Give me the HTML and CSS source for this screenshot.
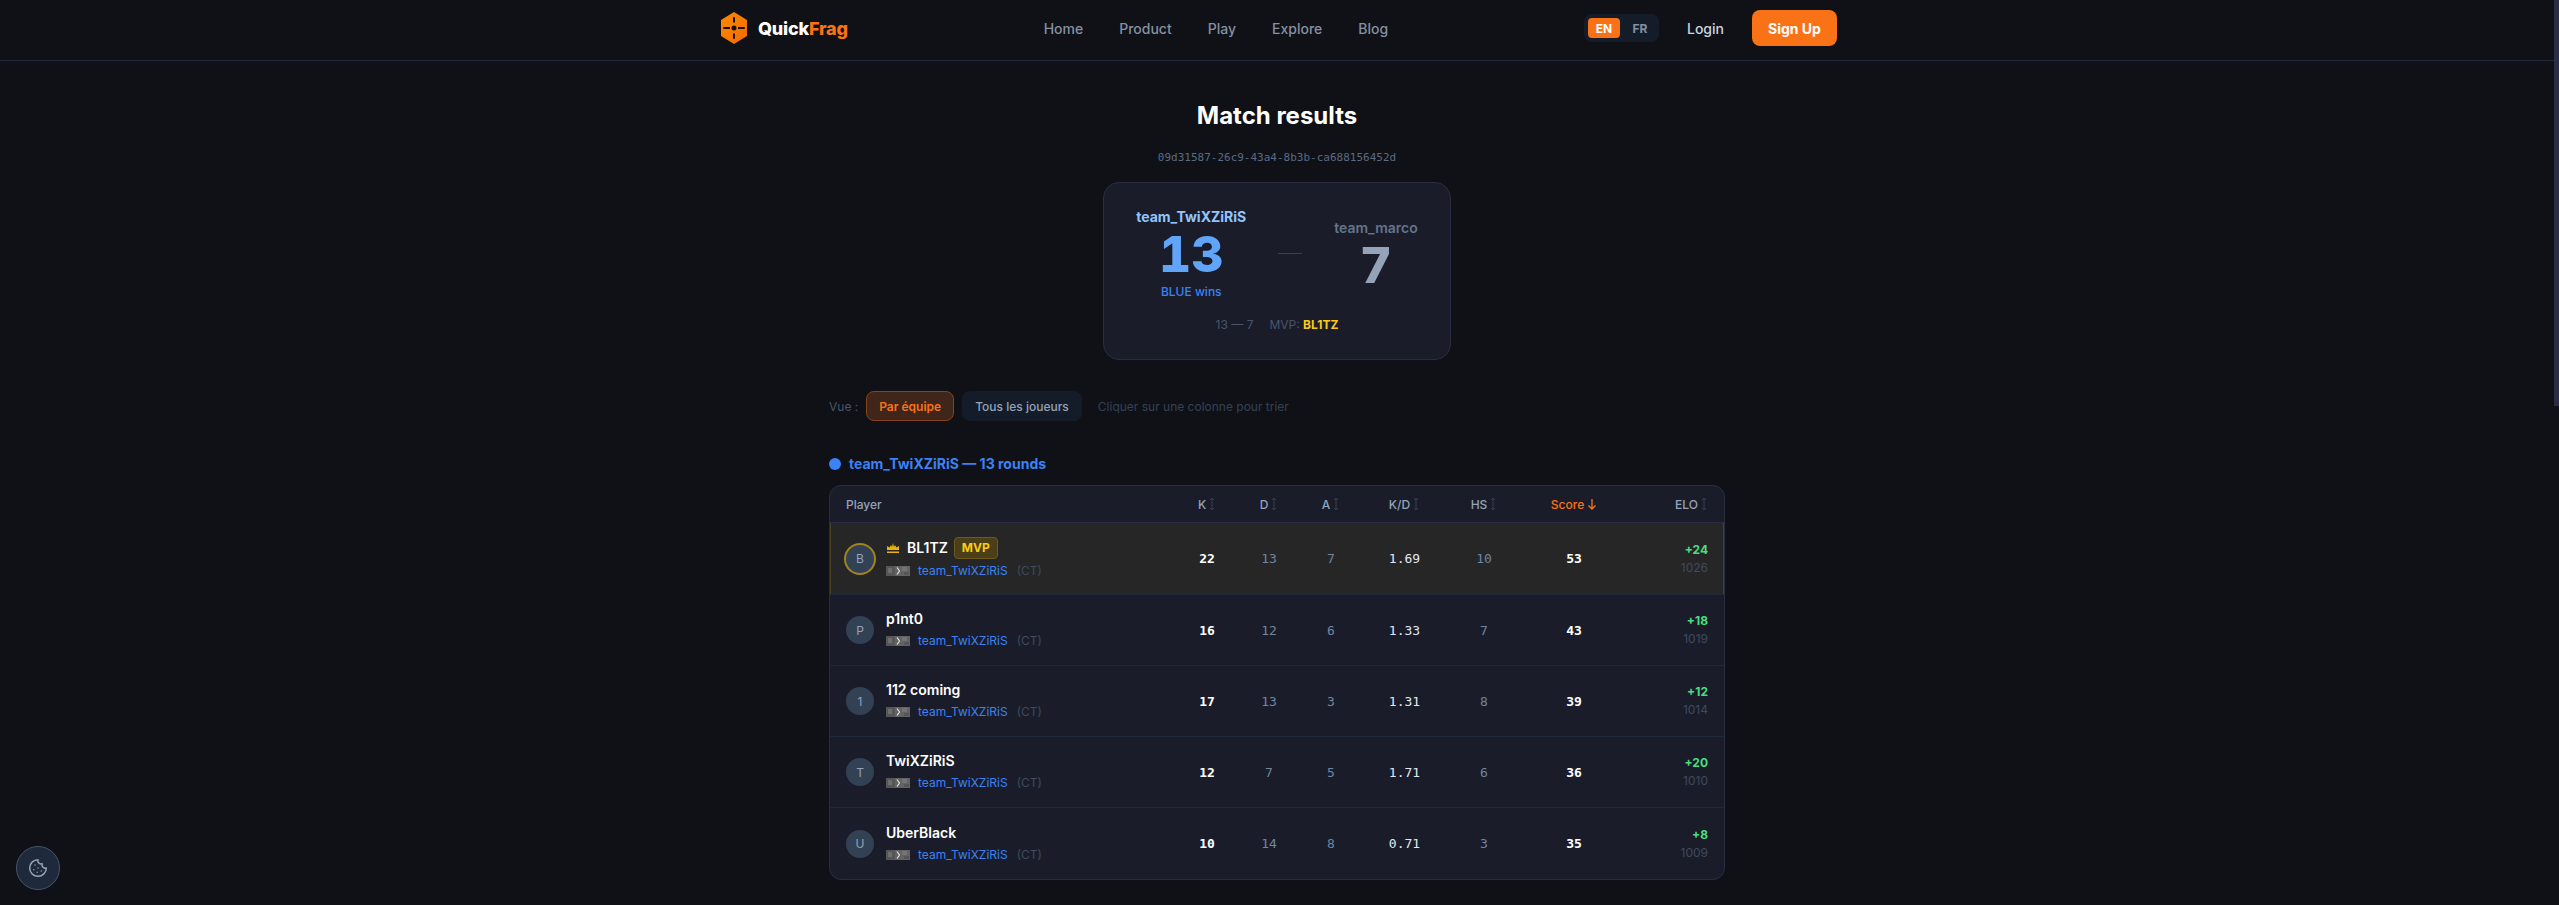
FILE: index.html
```html
<!DOCTYPE html>
<html lang="en">
<head>
<meta charset="utf-8">
<title>Match results - QuickFrag</title>
<link rel="stylesheet" href="styles.css">
</head>
<body>
<svg class="defs" width="0" height="0" aria-hidden="true">
  <symbol id="sort" viewBox="0 0 8 14"><path d="M4 1v12M2 3l2-2 2 2M2 11l2 2 2-2" fill="none" stroke="currentColor" stroke-width="1"/></symbol>
  <symbol id="flag" viewBox="0 0 24 10"><rect width="24" height="10" fill="#636363"/><rect width="9" height="10" fill="#565656"/><rect x="2" y="2" width="4" height="5" fill="#6e6e6e"/><rect x="16" y="1" width="5" height="4" fill="#747474"/><rect x="18" y="6" width="5" height="3" fill="#565656"/><path d="M11 1.500l2.500 3.500-2.500 3.500" fill="none" stroke="#e0e0e0" stroke-width="1.200"/></symbol>
</svg>
<div class="scroller">
<header class="topbar">
  <div class="topbar-inner">
    <a class="brand" href="#">
      <svg class="brand-mark" viewBox="0 0 28 32" width="28" height="32">
        <defs><linearGradient id="hex" x1="0" y1="0" x2="1" y2="1"><stop offset="0" stop-color="#ff8a00"/><stop offset="1" stop-color="#f06a00"/></linearGradient></defs>
        <path d="M14 0l13 8v16l-13 8-13-8V8z" fill="url(#hex)"/>
        <path d="M14 5.300V10.500M14 21.500v5.200M3.300 16H10M18 16h6.700" stroke="#1a1206" stroke-width="2"/>
        <circle cx="14" cy="16" r="2.500" fill="#1a1206"/>
      </svg>
      <span class="brand-name">Quick<span class="brand-accent">Frag</span></span>
    </a>
    <nav class="nav-links">
      <a href="#">Home</a><a href="#">Product</a><a href="#">Play</a><a href="#">Explore</a><a href="#">Blog</a>
    </nav>
    <div class="nav-actions">
      <div class="lang"><span class="lang-btn is-active">EN</span><span class="lang-btn">FR</span></div>
      <a class="login" href="#">Login</a>
      <a class="signup" href="#">Sign Up</a>
    </div>
  </div>
</header>

<main class="page">
  <h1 class="title">Match results</h1>
  <p class="match-id">09d31587-26c9-43a4-8b3b-ca688156452d</p>

  <section class="score-card">
    <div class="score-teams">
      <div class="score-team">
        <div class="score-name win">team_TwiXZiRiS</div>
        <div class="score-num win-num">13</div>
        <div class="score-note">BLUE wins</div>
      </div>
      <div class="score-dash"></div>
      <div class="score-team">
        <div class="score-name lose">team_marco</div>
        <div class="score-num lose-num">7</div>
      </div>
    </div>
    <div class="score-foot"><span>13 — 7</span><span>MVP: <b>BL1TZ</b></span></div>
  </section>

  <div class="view-bar">
    <span class="view-label">Vue :</span>
    <button class="view-btn is-active">Par équipe</button>
    <button class="view-btn">Tous les joueurs</button>
    <span class="view-hint">Cliquer sur une colonne pour trier</span>
  </div>

  <h2 class="team-head"><span class="team-dot"></span>team_TwiXZiRiS — 13 rounds</h2>

  <div class="board">
    <div class="row head">
      <div class="c-player">Player</div>
      <div class="c-num">K<svg class="sort"><use href="#sort"/></svg></div>
      <div class="c-num">D<svg class="sort"><use href="#sort"/></svg></div>
      <div class="c-num">A<svg class="sort"><use href="#sort"/></svg></div>
      <div class="c-num">K/D<svg class="sort"><use href="#sort"/></svg></div>
      <div class="c-num">HS<svg class="sort"><use href="#sort"/></svg></div>
      <div class="c-num is-sorted">Score<svg class="sort-down" viewBox="0 0 10 12"><path d="M5 1v10M1.500 7.500L5 11l3.500-3.500" fill="none" stroke="currentColor" stroke-width="1.300"/></svg></div>
      <div class="c-elo">ELO<svg class="sort"><use href="#sort"/></svg></div>
    </div>

    <div class="row player is-mvp">
      <div class="c-player"><span class="avatar ring">B</span><div class="who">
        <div class="name"><svg class="crown" viewBox="0 0 14 12" width="14" height="12"><path d="M1 8V4l2.500 1.500L5 3l1 2 1-4 1 4 1-2 1.500 2.500L13 4v4z" fill="#eab308"/><rect x="1" y="9.500" width="12" height="1.500" fill="#eab308"/></svg>BL1TZ<span class="mvp">MVP</span></div>
        <div class="meta"><svg class="flag"><use href="#flag"/></svg><span class="meta-team">team_TwiXZiRiS</span><span class="meta-side">(CT)</span></div>
      </div></div>
      <div class="num strong">22</div><div class="num">13</div><div class="num">7</div><div class="num bright">1.69</div><div class="num">10</div><div class="num strong">53</div>
      <div class="c-elo elo"><b>+24</b><span>1026</span></div>
    </div>

    <div class="row player">
      <div class="c-player"><span class="avatar">P</span><div class="who">
        <div class="name">p1nt0</div>
        <div class="meta"><svg class="flag"><use href="#flag"/></svg><span class="meta-team">team_TwiXZiRiS</span><span class="meta-side">(CT)</span></div>
      </div></div>
      <div class="num strong">16</div><div class="num">12</div><div class="num">6</div><div class="num bright">1.33</div><div class="num">7</div><div class="num strong">43</div>
      <div class="c-elo elo"><b>+18</b><span>1019</span></div>
    </div>

    <div class="row player">
      <div class="c-player"><span class="avatar">1</span><div class="who">
        <div class="name">112 coming</div>
        <div class="meta"><svg class="flag"><use href="#flag"/></svg><span class="meta-team">team_TwiXZiRiS</span><span class="meta-side">(CT)</span></div>
      </div></div>
      <div class="num strong">17</div><div class="num">13</div><div class="num">3</div><div class="num bright">1.31</div><div class="num">8</div><div class="num strong">39</div>
      <div class="c-elo elo"><b>+12</b><span>1014</span></div>
    </div>

    <div class="row player">
      <div class="c-player"><span class="avatar">T</span><div class="who">
        <div class="name">TwiXZiRiS</div>
        <div class="meta"><svg class="flag"><use href="#flag"/></svg><span class="meta-team">team_TwiXZiRiS</span><span class="meta-side">(CT)</span></div>
      </div></div>
      <div class="num strong">12</div><div class="num">7</div><div class="num">5</div><div class="num bright">1.71</div><div class="num">6</div><div class="num strong">36</div>
      <div class="c-elo elo"><b>+20</b><span>1010</span></div>
    </div>

    <div class="row player">
      <div class="c-player"><span class="avatar">U</span><div class="who">
        <div class="name">UberBlack</div>
        <div class="meta"><svg class="flag"><use href="#flag"/></svg><span class="meta-team">team_TwiXZiRiS</span><span class="meta-side">(CT)</span></div>
      </div></div>
      <div class="num strong">10</div><div class="num">14</div><div class="num">8</div><div class="num bright">0.71</div><div class="num">3</div><div class="num strong">35</div>
      <div class="c-elo elo"><b>+8</b><span>1009</span></div>
    </div>
  </div>
</main>
</div>
<div class="scroll-thumb"></div>

<button class="cookie" aria-label="Cookies">
  <svg viewBox="0 0 24 24" width="20" height="20" fill="none" stroke="currentColor" stroke-width="1.800" stroke-linecap="round" stroke-linejoin="round"><path d="M12 2a10 10 0 1 0 10 10 4 4 0 0 1-5-5 4 4 0 0 1-5-5"/><path d="M8.500 8.500v.01M16 15.500v.01M12 12v.01M11 17v.01M7 14v.01"/></svg>
</button>
</body>
</html>
```
FILE: styles.css
```css
* { box-sizing: border-box; }
html, body { height: 100%; overflow: hidden; }
html { background: #0f1117; }
body {
  margin: 0;
  background: #0f1117;
  color: #fff;
  font-family: Inter, "Liberation Sans", sans-serif;
}
.scroller { height: 100vh; overflow: hidden; padding-right: 5px; }
.scroll-thumb { position: fixed; top: 0; right: 0; width: 5px; height: 406px; background: #2a2d45; }
a { color: inherit; text-decoration: none; }
.defs { position: absolute; }

.topbar { height: 61px; border-bottom: 1px solid #1e293b; }
.topbar-inner {
  max-width: 1152px; height: 60px; margin: 0 auto; padding: 0 16px 4px;
  display: flex; align-items: center; justify-content: space-between;
}
.brand { display: flex; align-items: center; gap: 10px; padding-left: 3px; }
.brand-mark { display: block; }
.brand-name { font-size: 18px; font-weight: 800; letter-spacing: -0.2px; color: #fff; }
.brand-accent { color: #f97316; }
.nav-links { display: flex; gap: 36px; font-size: 14px; font-weight: 500; color: #8590a2; }
.nav-actions { display: flex; align-items: center; }
.lang { display: flex; padding: 4px; border-radius: 8px; background: #141c2a; margin-right: 28px; }
.lang-btn {
  width: 32px; height: 20px; border-radius: 4px; display: flex; align-items: center; justify-content: center;
  font-size: 12px; font-weight: 700; color: #8590a2;
}
.lang-btn + .lang-btn { width: 35px; padding-left: 5px; }
.lang-btn.is-active { background: #f97316; color: #fff; }
.login { font-size: 14px; font-weight: 500; color: #cbd5e1; margin-right: 28px; }
.signup {
  height: 36px; width: 85px; border-radius: 8px; background: #f97316; color: #fff;
  font-size: 14px; font-weight: 700; display: flex; align-items: center; justify-content: center;
}

.page { width: 896px; margin: 0 auto; padding-top: 39px; display: flex; flex-direction: column; align-items: stretch; }
.title { margin: 0; font-size: 24px; line-height: 32px; font-weight: 700; text-align: center; }
.match-id {
  margin: 18px 0 0; text-align: center; line-height: 16px; font-size: 11px; color: #5b6b85;
  font-family: "DejaVu Sans Mono", "Liberation Mono", monospace;
}
.score-card {
  align-self: center; width: 348px; height: 178px; margin-top: 16px;
  border: 1px solid #2a2d42; border-radius: 16px; background: #1a1d29;
  display: flex; flex-direction: column; align-items: center; padding-top: 24px;
}
.score-teams { display: flex; align-items: center; gap: 32px; }
.score-team { display: flex; flex-direction: column; align-items: center; }
.score-team + .score-dash + .score-team { padding-top: 3px; }
.score-name { font-size: 14px; line-height: 20px; font-weight: 600; }
.score-name.win { color: #93c5fd; font-weight: 700; }
.score-name.lose { color: #64748b; }
.score-num { font-size: 50px; line-height: 54px; font-weight: 800; font-variant-numeric: tabular-nums; }
.win-num { color: #60a5fa; }
.lose-num { color: #94a3b8; }
.score-note { font-size: 12px; line-height: 16px; font-weight: 500; color: #3b82f6; margin-top: 3px; }
.score-dash { width: 24px; height: 1px; background: #334155; }
.score-foot { margin-top: 17px; display: flex; gap: 16px; font-size: 12px; line-height: 16px; color: #475569; }
.score-foot b { color: #facc15; font-weight: 700; }

.view-bar { display: flex; align-items: center; margin-top: 31px; font-size: 12px; }
.view-label { color: #475569; margin-right: 8px; }
.view-btn {
  height: 30px; padding: 0 12px; margin-right: 8px; border: 1px solid transparent; border-radius: 8px;
  background: #141c2a; color: #94a3b8; font: 500 12px Inter, sans-serif;
}
.view-btn.is-active { background: #40251a; border-color: #8a4318; color: #f97316; font-weight: 600; }
.view-hint { color: #334155; margin-left: 8px; }

.team-head {
  display: flex; align-items: center; gap: 8px; margin: 33px 0 11px;
  font-size: 14px; line-height: 20px; font-weight: 700; color: #3b82f6;
}
.team-dot { width: 12px; height: 12px; border-radius: 50%; background: #3b82f6; }

.board { border: 1px solid #2a2d42; border-radius: 12px; background: #1a1d29; overflow: hidden; }
.row { display: grid; grid-template-columns: 346px 62px 62px 62px 85px 74px 106px 97px; align-items: center; }
.head { height: 37px; border-bottom: 1px solid #2a2d42; font-size: 12px; font-weight: 500; color: #94a3b8; }
.c-player { padding-left: 16px; display: flex; align-items: center; gap: 12px; }
.c-num { display: flex; align-items: center; justify-content: center; }
.c-elo { padding-right: 16px; display: flex; align-items: center; justify-content: flex-end; }
.sort { width: 8px; height: 14px; margin-left: 2px; color: #334155; }
.sort-down { width: 10px; height: 12px; margin-left: 3px; }
.is-sorted { color: #f97316; }

.player { height: 71px; border-bottom: 1px solid #1e293b; }
.player:last-child { border-bottom: 0; height: 71px; }
.is-mvp { height: 72px; background: #262626; box-shadow: inset 1px 0 0 #4a4220, inset -1px 0 0 #4a4220; }
.avatar {
  width: 28px; height: 28px; flex: none; border-radius: 50%; background: #334155; color: #94a3b8;
  font-size: 12px; display: flex; align-items: center; justify-content: center;
}
.avatar.ring { box-shadow: 0 0 0 2px #a1841f; }
.who { display: flex; flex-direction: column; gap: 4px; padding-bottom: 2px; }
.name { display: flex; align-items: center; font-size: 14px; line-height: 20px; font-weight: 600; color: #fff; }
.crown { margin-right: 7px; }
.mvp {
  margin-left: 6px; padding: 0 7px; height: 22px; display: flex; align-items: center;
  border: 1px solid #6b5a1c; border-radius: 4px; background: #4a3f18; color: #facc15; font-size: 12px; font-weight: 700;
}
.meta { display: flex; align-items: center; font-size: 12px; line-height: 16px; }
.flag { width: 24px; height: 10px; margin-right: 8px; }
.meta-team { color: #3b82f6; }
.meta-side { color: #3e4a5e; margin-left: 9px; }
.num { text-align: center; font: 13px "DejaVu Sans Mono", "Liberation Mono", monospace; color: #6f86a3; }
.num.strong { color: #fff; font-weight: 700; }
.num.bright { color: #e2e8f0; }
.elo { flex-direction: column; align-items: flex-end; font-size: 12px; line-height: 16px; gap: 2px; }
.elo b { color: #4ade80; font-weight: 700; }
.elo span { color: #3e4a5e; }

.cookie {
  position: fixed; left: 16px; bottom: 15px; width: 44px; height: 44px; padding: 0;
  border: 1px solid #475569; border-radius: 50%; background: #1e293b; color: #94a3b8;
  display: flex; align-items: center; justify-content: center;
}
```
